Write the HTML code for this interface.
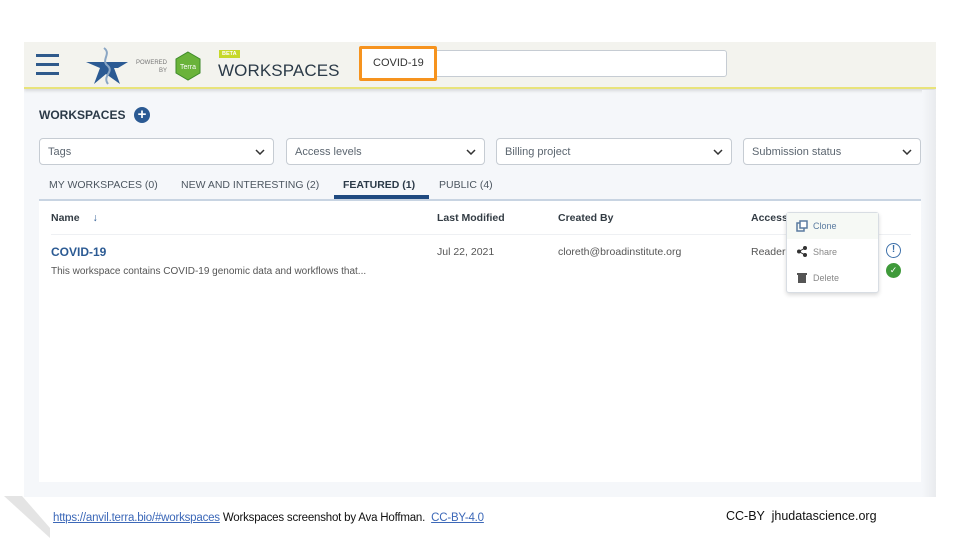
<!DOCTYPE html>
<html><head><style>
*{box-sizing:border-box;margin:0;padding:0}
body{width:960px;height:540px;background:#fff;font-family:"Liberation Sans",sans-serif;position:relative;overflow:hidden}
.abs{position:absolute}
.shot{left:24px;top:42px;width:912px;height:455px;background:#f5f7fa;overflow:hidden}
.hdr{left:0;top:0;width:912px;height:47px;background:#f3f3ee;border-bottom:2px solid #e8e37a;box-shadow:0 2px 3px rgba(0,0,0,.12)}
.sel{height:27px;background:#fff;border:1px solid #c6ccd3;border-radius:4px;font-size:11px;color:#5c6670;padding:7px 8px}
.sel svg{position:absolute;right:8px;top:10px}
.tab{font-size:10.5px;color:#4c5660;top:137px}
.th{font-size:10.5px;font-weight:bold;color:#333c44;top:170px}
</style></head><body>
<div class="abs shot">
 <div class="abs hdr">
  <div class="abs" style="left:12px;top:12px;width:23px;height:3px;background:#2f5a8c;box-shadow:0 9px 0 #2f5a8c,0 18px 0 #2f5a8c"></div>
  <svg class="abs" style="left:60px;top:4px" width="46" height="40" viewBox="0 0 46 40"><path d="M2 16 L44 16 L34 22 L30 22 L36 38 L22 28 L10 38 L16 22 Z" fill="#2b5a93"/><path d="M20 2 C28 8 16 14 24 20 C30 26 18 30 24 38" stroke="#8aa6c4" stroke-width="2" fill="none"/></svg>
  <div class="abs" style="left:112px;top:17px;font-size:6px;color:#777;text-align:right;line-height:8px">POWERED<br>BY</div>
  <svg class="abs" style="left:150px;top:9px" width="28" height="30" viewBox="0 0 28 30"><path d="M14 1 L26 8 L26 22 L14 29 L2 22 L2 8 Z" fill="#6ab33a" stroke="#3d8a2a"/><text x="14" y="18" font-size="7" fill="#fff" text-anchor="middle" font-family="Liberation Sans">Terra</text></svg>
  <div class="abs" style="left:195px;top:8px;background:#c6d82a;color:#fff;font-size:5.5px;font-weight:bold;padding:1px 3px">BETA</div>
  <div class="abs" style="left:194px;top:19px;font-size:17px;color:#2b3a48;letter-spacing:.1px">WORKSPACES</div>
  <div class="abs" style="left:338px;top:8px;width:365px;height:27px;background:#fff;border:1px solid #c6ccd3;border-radius:3px"></div>
  <div class="abs" style="left:335px;top:4px;width:78px;height:35px;border:3px solid #f6931e;border-radius:2px;background:#fff;font-size:11px;color:#333;padding:8px 0 0 11px">COVID-19</div>
 </div>
 <div class="abs" style="left:15px;top:66px;font-size:12px;font-weight:bold;color:#2b3a48">WORKSPACES</div>
 <div class="abs" style="left:110px;top:65px;width:16px;height:16px;border-radius:50%;background:#2b5a93;color:#fff;font-size:15px;line-height:16px;text-align:center;font-weight:bold">+</div>
 <div class="abs sel" style="left:15px;top:96px;width:235px">Tags<svg width="10" height="6"><path d="M1 1 L5 5 L9 1" stroke="#333" stroke-width="1.5" fill="none"/></svg></div>
 <div class="abs sel" style="left:262px;top:96px;width:199px">Access levels<svg width="10" height="6"><path d="M1 1 L5 5 L9 1" stroke="#333" stroke-width="1.5" fill="none"/></svg></div>
 <div class="abs sel" style="left:472px;top:96px;width:236px">Billing project<svg width="10" height="6"><path d="M1 1 L5 5 L9 1" stroke="#333" stroke-width="1.5" fill="none"/></svg></div>
 <div class="abs sel" style="left:719px;top:96px;width:178px">Submission status<svg width="10" height="6"><path d="M1 1 L5 5 L9 1" stroke="#333" stroke-width="1.5" fill="none"/></svg></div>
 <div class="abs tab" style="left:25px">MY WORKSPACES (0)</div>
 <div class="abs tab" style="left:157px">NEW AND INTERESTING (2)</div>
 <div class="abs tab" style="left:319px;font-weight:bold;color:#2b3a48">FEATURED (1)</div>
 <div class="abs tab" style="left:415px">PUBLIC (4)</div>
 <div class="abs" style="left:310px;top:153px;width:95px;height:4px;background:#1f4a80"></div>
 <div class="abs" style="left:15px;top:157px;width:882px;height:283px;background:#fff;border-top:2px solid #c8d4e2"></div>
 <div class="abs th" style="left:27px">Name <span style="color:#2b5a93;margin-left:10px">&#8595;</span></div>
 <div class="abs th" style="left:413px">Last Modified</div>
 <div class="abs th" style="left:534px">Created By</div>
 <div class="abs th" style="left:727px">Access</div>
 <div class="abs" style="left:27px;top:192px;width:860px;height:1px;background:#eef0f3"></div>
 <div class="abs" style="left:27px;top:203px;font-size:12px;font-weight:bold;color:#2b5a93">COVID-19</div>
 <div class="abs" style="left:27px;top:224px;font-size:10px;color:#555">This workspace contains COVID-19 genomic data and workflows that...</div>
 <div class="abs" style="left:413px;top:204px;font-size:10.5px;color:#555">Jul 22, 2021</div>
 <div class="abs" style="left:534px;top:204px;font-size:10.5px;color:#555">cloreth@broadinstitute.org</div>
 <div class="abs" style="left:727px;top:204px;font-size:10.5px;color:#555">Reader</div>
 <div class="abs" style="left:762px;top:170px;width:93px;height:81px;background:#fff;border:1px solid #d8dde3;border-radius:3px;box-shadow:0 2px 4px rgba(0,0,0,.15)">
  <div style="height:26px;background:#f6f9f5;font-size:9px;color:#5a7ba0;padding:8px 0 0 26px;position:relative"><svg style="position:absolute;left:9px;top:7px" width="12" height="12"><rect x="1" y="3" width="7" height="8" fill="none" stroke="#5a7ba0" stroke-width="1.5"/><rect x="4" y="1" width="7" height="7" fill="#fff" stroke="#5a7ba0" stroke-width="1.5"/></svg>Clone</div>
  <div style="height:26px;font-size:9px;color:#888;padding:8px 0 0 26px;position:relative"><svg style="position:absolute;left:10px;top:7px" width="10" height="11"><circle cx="8" cy="2" r="2" fill="#333"/><circle cx="2" cy="5.5" r="2" fill="#333"/><circle cx="8" cy="9" r="2" fill="#333"/><path d="M8 2 L2 5.5 L8 9" stroke="#333" fill="none"/></svg>Share</div>
  <div style="height:26px;font-size:9px;color:#888;padding:8px 0 0 26px;position:relative"><svg style="position:absolute;left:10px;top:7px" width="10" height="11"><rect x="0" y="1" width="10" height="2" fill="#555"/><rect x="1" y="3" width="8" height="8" fill="#555"/></svg>Delete</div>
 </div>
 <div class="abs" style="left:862px;top:201px;width:15px;height:15px;border:1.5px solid #3a6ea8;border-radius:50%;color:#3a6ea8;font-size:10px;text-align:center;line-height:12px;font-weight:bold">!</div>
 <div class="abs" style="left:862px;top:221px;width:15px;height:15px;background:#3f9a3a;border-radius:50%;color:#fff;font-size:9px;text-align:center;line-height:15px">&#10003;</div>
 <div class="abs" style="left:898px;top:48px;width:14px;height:407px;background:linear-gradient(90deg,#f5f7fa,#e9ebee)"></div>
</div>
<svg class="abs" style="left:0;top:494px" width="52" height="44"><path d="M4 2 L22 2 L50 34 L50 44 Z" fill="#e4e4e4"/></svg>
<div class="abs" style="left:53px;top:512px;font-size:11.5px;color:#111;letter-spacing:-.2px"><span style="color:#3c68b8;text-decoration:underline">https://anvil.terra.bio/#workspaces</span> Workspaces screenshot by Ava Hoffman. &nbsp;<span style="color:#3c68b8;text-decoration:underline">CC-BY-4.0</span></div>
<div class="abs" style="left:726px;top:509px;font-size:12.5px;color:#111">CC-BY &nbsp;jhudatascience.org</div>
</body></html>
